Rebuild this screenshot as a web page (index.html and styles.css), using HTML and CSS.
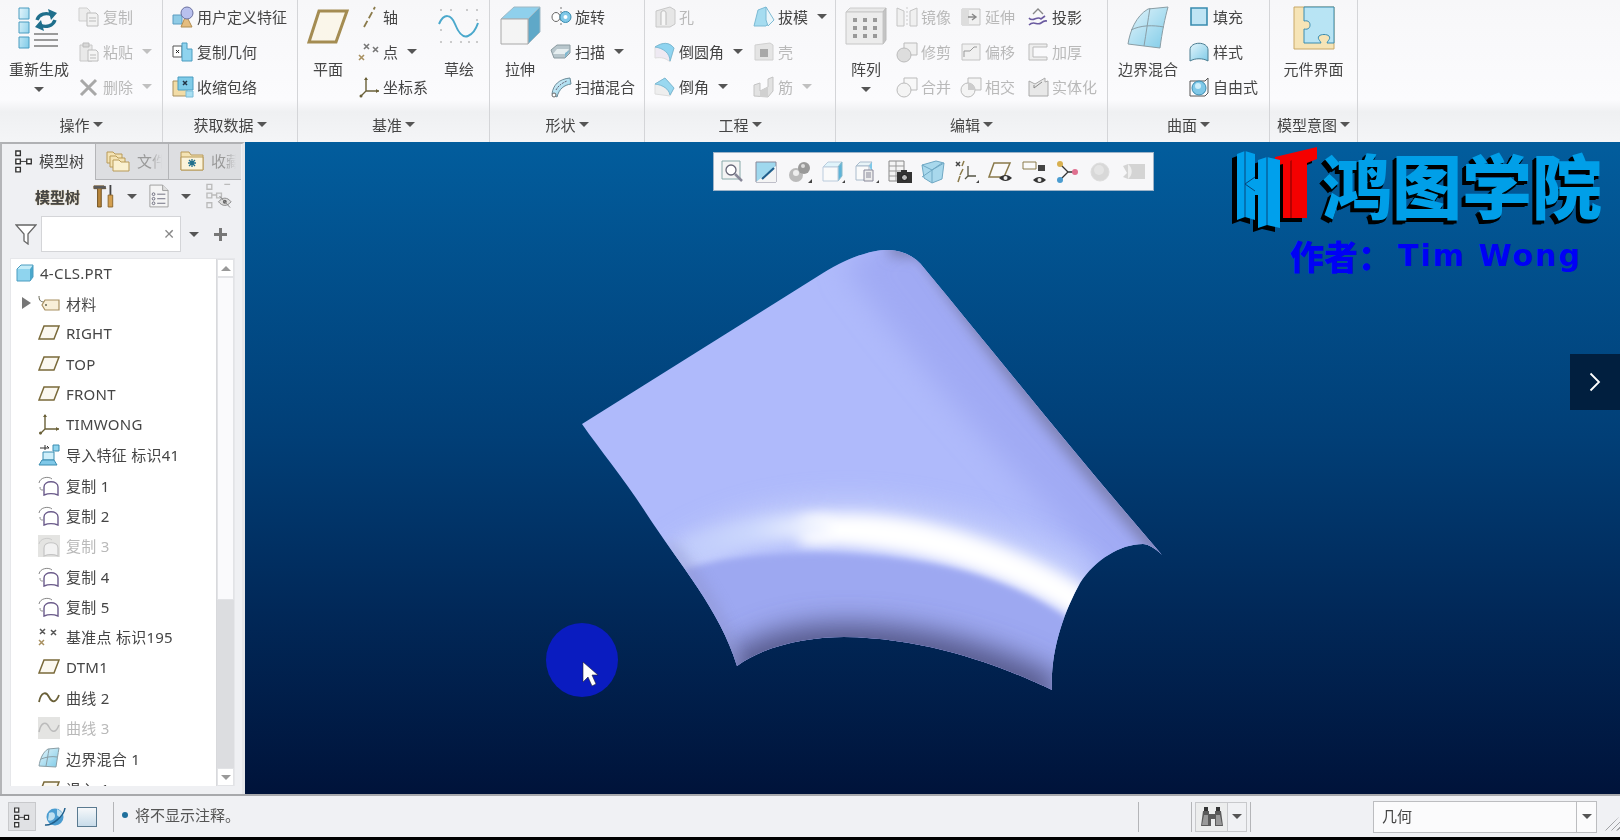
FILE: index.html
```html
<!DOCTYPE html>
<html lang="zh-CN">
<head>
<meta charset="utf-8">
<title>4-CLS.PRT</title>
<link rel="stylesheet" href="styles.css">
</head>
<body>
<svg class="defs" xmlns="http://www.w3.org/2000/svg">
  <defs>
    <linearGradient id="lb" x1="0" y1="0" x2="1" y2="1"><stop offset="0" stop-color="#e4f5fb"/><stop offset="1" stop-color="#7fcbe8"/></linearGradient>
    <symbol id="regen" viewBox="0 0 44 44">
      <g fill="url(#lb)" stroke="#4a9cc0"><path d="M2 2h10v11H2zM2 16h10v11H2zM2 31h10v11H2z"/></g>
      <g fill="none" stroke="#1f6f8c" stroke-width="3.4"><path d="M20 14c2-6 9-8 15-5"/><path d="M38 14c-2 6-9 8-15 5"/></g>
      <path d="M31 3l9 4-6 7zM27 25l-9-4 6-7z" fill="#1f6f8c"/>
      <path d="M17 28h24M17 34h24M17 40h24" stroke="#9a9a9a" stroke-width="2.2"/>
    </symbol>
    <symbol id="copy" viewBox="0 0 22 22"><path d="M1 2h8l3 3v10H1z" fill="#ececec" stroke="#cfcfcf"/><path d="M9 7h9l2 2v11H9z" fill="#f2f2f2" stroke="#bcbcbc"/><path d="M11 12h7M11 15h7" stroke="#bbb"/></symbol>
    <symbol id="paste" viewBox="0 0 22 22"><path d="M2 4h12v16H2z" fill="#e9e9e9" stroke="#c8c8c8"/><path d="M5 2h6v4H5z" fill="#d8d8d8" stroke="#bbb"/><path d="M10 9h8l2 2v9H10z" fill="#f4f4f4" stroke="#bcbcbc"/><path d="M12 14h6M12 17h6" stroke="#bbb"/></symbol>
    <symbol id="del" viewBox="0 0 22 22"><path d="M3 4l15 15M18 4L3 19" stroke="#a8a8a8" stroke-width="3"/></symbol>
    <symbol id="udf" viewBox="0 0 22 22"><path d="M1 9h9v9H1z" fill="#8fcbe6" stroke="#5a9cc0"/><path d="M9 21l5-12 6 12z" fill="#e4bd80" stroke="#b08c50"/><circle cx="15" cy="7" r="6" fill="#b8c0ee" stroke="#6a70a0"/></symbol>
    <symbol id="cgeom" viewBox="0 0 22 22"><path d="M1 5h9v11H1z" fill="#fff" stroke="#555"/><path d="M4 9l3 3M7 9l-3 3" stroke="#222"/><path d="M10 2h5v6h5v12H10z" fill="#8fd3ee" stroke="#4a9cc0"/></symbol>
    <symbol id="shrink" viewBox="0 0 22 22"><path d="M1 5h14v15H1z" fill="#f2dca6" stroke="#a89060"/><path d="M6 1h15v13H6z" fill="#7fcbe8" stroke="#4a9cc0"/><path d="M11 5l4 4M15 5l-4 4" stroke="#234" stroke-width="1.5"/><path d="M14 15h7v6h-7z" fill="#a9dff2" stroke="#7bbcd8"/></symbol>
    <symbol id="plane" viewBox="0 0 44 44"><path d="M13 5h28L30 36H3z" fill="#faf6ea" stroke="#a48c52" stroke-width="3"/></symbol>
    <symbol id="axis" viewBox="0 0 22 22"><path d="M6 21L17 1" stroke="#8a7a4a" stroke-width="1.8" stroke-dasharray="7 3" fill="none"/></symbol>
    <symbol id="point" viewBox="0 0 22 22" overflow="visible"><path d="M6 3l5 5M11 3L6 8M15 6l5 5M20 6l-5 5" stroke="#777" stroke-width="1.6"/><path d="M1 14l5 5M6 14l-5 5" stroke="#a89060" stroke-width="1.6"/></symbol>
    <symbol id="csys" viewBox="0 0 22 22"><path d="M8 2v13l-5 5M8 15h13" stroke="#6a6038" stroke-width="1.4" fill="none"/><path d="M6 4l2-3 2 3zM18 13l3 2-3 2z" fill="#6a6038"/><circle cx="3" cy="20" r="1.5" fill="#6a6038"/></symbol>
    <symbol id="sketch" viewBox="0 0 44 44"><g fill="#bbb"><circle cx="4" cy="4" r="1"/><circle cx="14" cy="4" r="1"/><circle cx="30" cy="4" r="1"/><circle cx="40" cy="4" r="1"/><circle cx="4" cy="24" r="1"/><circle cx="40" cy="14" r="1"/><circle cx="4" cy="36" r="1"/><circle cx="14" cy="36" r="1"/><circle cx="24" cy="36" r="1"/><circle cx="32" cy="36" r="1"/><circle cx="40" cy="36" r="1"/></g><path d="M2 18c5-11 12-10 16 0s8 14 13 12 8-7 10-13" fill="none" stroke="#4aa8cc" stroke-width="2"/></symbol>
    <symbol id="extrude" viewBox="0 0 44 44"><path d="M3 13L16 1h26L30 13z" fill="#8fd0ec" stroke="#9fb8c4"/><path d="M30 13L42 1v25L30 38z" fill="#5fa8c8" stroke="#9fb8c4"/><path d="M3 13h27v25H3z" fill="#f4f4f4" stroke="#a8a8a8"/></symbol>
    <symbol id="rev" viewBox="0 0 22 22"><path d="M11 1v20" stroke="#777" stroke-dasharray="2 2"/><ellipse cx="6" cy="11" rx="4" ry="4.5" fill="#fff" stroke="#666"/><ellipse cx="15.500" cy="11" rx="5.500" ry="5.500" fill="#7fc8e8" stroke="#3a8cb0"/><circle cx="15.500" cy="11" r="2" fill="#fff"/></symbol>
    <symbol id="sweep" viewBox="0 0 22 22"><path d="M1 9l6-5h13v8l-5 5H4z" fill="#b8c6cc" stroke="#8a9aa0"/><path d="M7 8h12l-4 5H3z" fill="#e6eef0"/><path d="M15 17v-5l5-3" fill="#7fb8d0"/></symbol>
    <symbol id="sblend" viewBox="0 0 22 22"><path d="M2 18C3 9 9 3 20 2l1 6C14 9 9 13 7 21z" fill="url(#lb)" stroke="#6a8a98"/><path d="M6 14c2-4 6-7 11-9" stroke="#667" fill="none" stroke-dasharray="2 1"/><circle cx="4" cy="19" r="2" fill="#fff" stroke="#666"/></symbol>
    <symbol id="hole" viewBox="0 0 22 22"><path d="M2 5l14-4 5 3v14l-5 3H2z" fill="#e6e6e6" stroke="#c8c8c8"/><path d="M7 19V7c0-3 5-3 5 0v12" fill="#f6f6f6" stroke="#bbb"/></symbol>
    <symbol id="draft" viewBox="0 0 22 22"><path d="M1 20l4-16 8-3 5 13-5 6z" fill="#a5dcf0" stroke="#7cbad4"/><path d="M13 1l8 13-6 6-2-6z" fill="#e9f5fa" stroke="#7cbad4"/></symbol>
    <symbol id="round" viewBox="0 0 22 22"><path d="M1 6c8-5 14-5 19 1l-4 14C12 17 7 16 1 17z" fill="#eee9f2" stroke="#ddd"/><path d="M1 6c8-5 14-5 19 1l-4 13c0-8-7-13-15-14z" fill="#8fd4f0" stroke="#7cbad4"/></symbol>
    <symbol id="chamf" viewBox="0 0 22 22"><path d="M1 8l10-6 9 10-4 8-15-2z" fill="#eee" stroke="#ddd"/><path d="M1 8l10-6 9 10-4 7c-1-6-7-10-15-11z" fill="#9ad8f0" stroke="#7cbad4"/></symbol>
    <symbol id="shell" viewBox="0 0 22 22"><path d="M2 4l15-2 3 2v15H2z" fill="#e4e4e4" stroke="#d0d0d0"/><path d="M7 8h8v8H7z" fill="#a8a8a8"/></symbol>
    <symbol id="rib" viewBox="0 0 22 22"><path d="M1 20V9l6-2v8l8-4V3l5-2v14l-5 6z" fill="#e2e2e2" stroke="#c4c4c4"/><path d="M7 15l8-4v10H7z" fill="#d0d0d0"/></symbol>
    <symbol id="pattern" viewBox="0 0 44 44"><path d="M2 6l4-4h36l-3 4z" fill="#e8e8e8" stroke="#ccc"/><path d="M39 6l3-4v32l-3 4z" fill="#c4c4c4" stroke="#bbb"/><path d="M2 6h37v32H2z" fill="#ececec" stroke="#c6c6c6"/><g fill="#999"><path d="M9 12h4v4H9zM19 12h4v4h-4zM29 12h4v4h-4zM9 20h4v4H9zM19 20h4v4h-4zM29 20h4v4h-4zM9 28h4v4H9zM19 28h4v4h-4zM29 28h4v4h-4z"/></g></symbol>
    <symbol id="mirror" viewBox="0 0 22 22"><path d="M1 2l7 3v15H1zM21 2l-7 3v15h7z" fill="#f0f0f0" stroke="#c4c4c4"/><path d="M11 1v20" stroke="#ccc" stroke-dasharray="2 2"/></symbol>
    <symbol id="extend" viewBox="0 0 22 22"><path d="M2 3h18v16H2z" fill="#f0f0f0" stroke="#c4c4c4"/><path d="M2 3h7v16H2z" fill="#ddd"/><path d="M8 11h7M12 8l4 3-4 3" stroke="#888" fill="none" stroke-width="1.4"/></symbol>
    <symbol id="project" viewBox="0 0 22 22"><path d="M2 12c4 5 8-3 12 1l4-3M2 19c5-5 8 1 12-2s4-2 6-2" fill="none" stroke="#6a5aa0" stroke-width="1.6"/><path d="M6 8l5-5 5 5" fill="none" stroke="#888" stroke-width="1.4"/></symbol>
    <symbol id="trim" viewBox="0 0 22 22"><path d="M8 2h13v12H8z" fill="#f0f0f0" stroke="#bbb"/><circle cx="8" cy="14" r="7" fill="#ddd" stroke="#bbb"/></symbol>
    <symbol id="offset" viewBox="0 0 22 22"><path d="M2 3h18v16H2z" fill="#f0f0f0" stroke="#c4c4c4"/><path d="M4 16V10h6l4-4h3" fill="none" stroke="#999"/></symbol>
    <symbol id="thick" viewBox="0 0 22 22"><path d="M2 3h18v3H6v10h14v3H2z" fill="#eee" stroke="#bbb"/></symbol>
    <symbol id="merge" viewBox="0 0 22 22"><path d="M8 2h13v12H8z" fill="#f8f8f8" stroke="#bbb"/><circle cx="8" cy="14" r="7" fill="#f4f4f4" stroke="#bbb"/></symbol>
    <symbol id="isect" viewBox="0 0 22 22"><path d="M8 2h13v12H8z" fill="#f4f4f4" stroke="#bbb"/><circle cx="8" cy="14" r="7" fill="#f4f4f4" stroke="#bbb"/><path d="M8 7a7 7 0 0 1 7 7H8z" fill="#ccc"/></symbol>
    <symbol id="solid" viewBox="0 0 22 22"><path d="M2 5l6 3 10-6v4l3-1v15H2z" fill="#e8e8e8" stroke="#aaa"/><path d="M7 9v3l8-6" fill="none" stroke="#888"/></symbol>
    <symbol id="bblend" viewBox="0 0 44 44"><path d="M2 38C4 25 10 10 22 3l20-2c-3 11-6 25-8 41z" fill="url(#lb)" stroke="#8a9ea6"/><path d="M5 24c10-5 22-5 33-3M24 2c-2 12-4 26-6 38" fill="none" stroke="#8a9ea6"/></symbol>
    <symbol id="fill" viewBox="0 0 22 22"><path d="M3 2h16v17H3z" fill="#bfe4f4" stroke="#3a8cb0" stroke-width="1.6"/></symbol>
    <symbol id="style" viewBox="0 0 22 22"><path d="M2 20V9c0-9 18-9 18 0v11c-5-3-13-3-18 0z" fill="url(#lb)" stroke="#4a7c90"/></symbol>
    <symbol id="free" viewBox="0 0 22 22"><path d="M2 5h15l3-3v15l-3 3H2z" fill="none" stroke="#555"/><circle cx="11" cy="12" r="7" fill="#7fc8e8" stroke="#3a8cb0"/><circle cx="10" cy="10" r="3" fill="#cdeefa"/></symbol>
    <symbol id="iface" viewBox="0 0 44 44"><path d="M2 1h40v42H2z" fill="#f6e4b6" stroke="#c8a868"/><path d="M12 1H42V37H35c1-3 4-4 2-7-2-2-8-2-10 0-2 3 1 4 2 7H12V23c5 1 6-2 6-4s-1-5-6-4Z" fill="#b8e4f4" stroke="#3a8cb0"/></symbol>
    <symbol id="t-tree" viewBox="0 0 22 26"><g fill="#fff" stroke="#333" stroke-width="1.5"><path d="M2 2h5v5H2zM2 11h5v5H2zM2 20h5v5H2zM14 11h5v5h-5z"/></g><path d="M7 13.500h7" stroke="#333"/></symbol>
    <symbol id="folders" viewBox="0 0 24 24"><g stroke="#b89a58" fill="#f4e3b4"><path d="M1 4h6l2 2h7v9H1z"/><path d="M4 8h6l2 2h7v9H4z"/><path d="M7 12h6l2 2h8v9H7z" fill="#faf0d0"/></g></symbol>
    <symbol id="fav" viewBox="0 0 24 24"><path d="M1 4h8l2 3h12v15H1z" fill="#f4e3b4" stroke="#b89a58"/><path d="M1 9h22v13H1z" fill="#fbf3da" stroke="#b89a58"/><path d="M12 11v8M8 15h8M9 12l6 6M15 12l-6 6" stroke="#1f6f8c" stroke-width="1.3"/></symbol>
    <symbol id="tools" viewBox="0 0 24 26"><path d="M1 2h11l2 3H9v20H5V5H1z" fill="#b8863c" stroke="#6a4a18"/><path d="M1 2h13v3H1z" fill="#5a5a5a"/><path d="M18 1h2v11h-2z" fill="#444"/><path d="M16.500 12h5v13h-5z" fill="#d4a050" stroke="#8a6428"/></symbol>
    <symbol id="list" viewBox="0 0 22 26"><path d="M1 1h14l6 6v18H1z" fill="#f4f4f4" stroke="#999"/><path d="M15 1v6h6" fill="#ddd" stroke="#999"/><g stroke="#667" fill="none"><circle cx="5" cy="11" r="1.500"/><circle cx="5" cy="16" r="1.500"/><circle cx="5" cy="21" r="1.500"/><path d="M9 11h9M9 16h9M9 21h9"/></g></symbol>
    <symbol id="hide" viewBox="0 0 28 26"><g fill="none" stroke="#bbb" stroke-width="1.4"><path d="M1 1h5v5H1zM1 10h5v5H1zM1 20h5v5H1zM11 10h5v5h-5zM19 1h6M6 12h5"/></g><path d="M13 19c4-5 9-5 13 0-4 5-9 5-13 0z" fill="#ddd" stroke="#888"/><circle cx="19.500" cy="19" r="2" fill="#666"/><path d="M14 13l11 12" stroke="#888"/></symbol>
    <symbol id="funnel" viewBox="0 0 22 22"><path d="M1 2h20l-8 9v10l-4-3v-7z" fill="#fff" stroke="#666" stroke-width="1.3"/></symbol>
    <symbol id="t-cube" viewBox="0 0 18 18"><path d="M1 5l4-4h12l-3 4z" fill="#c4ecf8"/><path d="M14 5l3-4v12l-3 4z" fill="#4aa8cc"/><path d="M1 5h13v12H1z" fill="#8fd4ee"/><path d="M1 5l4-4h12v12l-3 4H1z" fill="none" stroke="#4a9cc0"/></symbol>
    <symbol id="t-tag" viewBox="0 0 22 18"><path d="M1 2c0 5 2 6 6 6" fill="none" stroke="#665"/><path d="M7 6h14v10H7l-3-5z" fill="#f8efd8" stroke="#a89060" stroke-width="1.2"/><circle cx="8" cy="11" r="1" fill="#665"/></symbol>
    <symbol id="t-plane" viewBox="0 0 22 18"><path d="M6 2h15l-5 13H1z" fill="#fbf8f0" stroke="#7a6a3a" stroke-width="1.5"/></symbol>
    <symbol id="t-csys" viewBox="0 0 22 22"><path d="M7 2v14l-5 5M7 16h14" stroke="#6a6038" stroke-width="1.4" fill="none"/><path d="M5 4l2-3 2 3zM18 14l3 2-3 2z" fill="#6a6038"/><circle cx="2.500" cy="20" r="1.500" fill="#6a6038"/></symbol>
    <symbol id="t-import" viewBox="0 0 22 22"><path d="M15 1h6v6h-6z" fill="#8fd4ee" stroke="#3a8cb0"/><path d="M5 8h11v8H5z" fill="#cfeffa" stroke="#3a8cb0"/><path d="M1 21l3-5h12l3 5z" fill="#7fc8e8" stroke="#3a8cb0"/><path d="M7 1v5M2 4h9l-2-2M9 4" stroke="#333" fill="none"/></symbol>
    <symbol id="t-copy" viewBox="0 0 22 22"><path d="M1 9C2 3 11 2 14 5" fill="none" stroke="#888"/><path d="M2 13c0 3 1 3 3 3" fill="none" stroke="#888"/><path d="M6 21V13C6 6 20 6 20 13v8c-5-2-9-2-14 0z" fill="#fff" stroke="#6a5a8a" stroke-width="1.4"/></symbol>
    <symbol id="t-copyd" viewBox="0 0 22 22"><path d="M0 0h22v22H0z" fill="#e4e4e2"/><path d="M1 9C2 3 11 2 14 5" fill="none" stroke="#ccc"/><path d="M6 21V13C6 6 20 6 20 13v8c-5-2-9-2-14 0z" fill="#f2f2f2" stroke="#c4c4c4" stroke-width="1.2"/></symbol>
    <symbol id="t-pts" viewBox="0 0 22 20"><path d="M2 2l5 5M7 2L2 7M13 3l5 5M18 3l-5 5" stroke="#555" stroke-width="1.500"/><path d="M1 13l5 5M6 13l-5 5" stroke="#a89060" stroke-width="1.500"/></symbol>
    <symbol id="t-curve" viewBox="0 0 22 14"><path d="M1 12C3 2 8 1 11 7s7 6 10-2" fill="none" stroke="#6a6038" stroke-width="1.800"/></symbol>
    <symbol id="t-curved" viewBox="0 0 22 22"><path d="M0 0h22v22H0z" fill="#e4e4e2"/><path d="M1 15C3 5 8 4 11 10s7 6 10-2" fill="none" stroke="#bbb" stroke-width="1.500"/></symbol>
    <symbol id="t-bb" viewBox="0 0 22 22"><path d="M1 19C2 12 5 5 10 2l11-1c-1 6-2 12-3 19z" fill="url(#lb)" stroke="#8a9ea6"/><path d="M3 12c5-2 11-3 16-2M11 2c-1 6-2 12-3 17" fill="none" stroke="#8a9ea6"/></symbol>
    <symbol id="globe" viewBox="0 0 22 22"><circle cx="11" cy="11" r="8.500" fill="#4a9cd0"/><path d="M5 7c4-2 6 0 6 3s-4 6-7 4M13 3c3 2 6 3 5 6s-4 2-5 0" fill="#bfe0f0"/><path d="M1 19C8 20 20 10 21 2" fill="none" stroke="#1f5f8c" stroke-width="1.500"/></symbol>
    <symbol id="bino" viewBox="0 0 24 22"><path d="M3 5h6v3h6V5h6l2 15h-8v-7H11v7H1z" fill="#5a5a5a"/><path d="M4 9h4v10H2z" fill="#999"/><path d="M16 9h4l2 10h-6z" fill="#999"/><path d="M4 1h4v4H4zM16 1h4v4h-4z" fill="#333"/></symbol>
    <symbol id="v1" viewBox="0 0 24 24"><path d="M1 1h18v18H1z" fill="#f4f4f4" stroke="#8aa"/><circle cx="10" cy="10" r="5" fill="#fff" stroke="#667" stroke-width="1.300"/><path d="M14 14l7 7" stroke="#889" stroke-width="2.500"/></symbol>
    <symbol id="v2" viewBox="0 0 24 24"><path d="M2 2h20v20H2z" fill="#9fd8ee" stroke="#889"/><path d="M2 22L22 6v16z" fill="#f4f4f4"/><path d="M8 19L20 8" stroke="#1f5f8c" stroke-width="2.200"/></symbol>
    <symbol id="v3" viewBox="0 0 24 24"><circle cx="8" cy="15" r="7" fill="#bbb"/><circle cx="8" cy="13" r="3" fill="#eee"/><circle cx="16" cy="8" r="6" fill="#999"/><circle cx="15" cy="6" r="2" fill="#ddd"/><path d="M20 23l4-4v4z" fill="#444"/></symbol>
    <symbol id="v4" viewBox="0 0 24 24"><path d="M2 7l5-5h14l-4 5z" fill="#e0f4fb" stroke="#bcd"/><path d="M17 7l4-5v14l-4 5z" fill="#5fb4d8" stroke="#8bc"/><path d="M2 7h15v14H2z" fill="#fafafa" stroke="#bcd"/><path d="M21 23l3-3v3z" fill="#444"/></symbol>
    <symbol id="v5" viewBox="0 0 24 24"><path d="M1 6l4-4h12l-3 4z" fill="#e8f4f8" stroke="#abc"/><path d="M14 6l3-4v10z" fill="#7fc8e8"/><path d="M1 6h13v14H1z" fill="#fafafa" stroke="#abc"/><path d="M9 10h9v11H9z" fill="#eee" stroke="#889"/><path d="M11 13h5M11 15h5M11 17h5" stroke="#889"/><path d="M21 23l3-3v3z" fill="#444"/></symbol>
    <symbol id="v6" viewBox="0 0 24 24"><path d="M1 1h15v20H1z" fill="#f4f4f4" stroke="#888"/><path d="M1 6h15M1 11h15M1 16h15M8 1v20" stroke="#999"/><path d="M9 12h15v11H9z" fill="#333"/><path d="M13 10h6v3h-6z" fill="#333"/><circle cx="16.500" cy="17.500" r="3" fill="#bbb" stroke="#111"/></symbol>
    <symbol id="v7" viewBox="0 0 24 24"><path d="M1 5l14-4 8 2-2 16-10 4-8-5z" fill="#a8d8ec" stroke="#6fa8c4"/><path d="M1 5l10 5 12-7M11 10v13M1 17l20-14" fill="none" stroke="#6fa8c4"/></symbol>
    <symbol id="v8" viewBox="0 0 24 24"><path d="M1 2l4 4M5 2L1 6" stroke="#444" stroke-width="1.500"/><path d="M9 1L7 6M5 16l-2 6M8 9L5 15" stroke="#8a7a4a" stroke-width="1.500"/><path d="M13 6v10M13 16h8M13 16l-3 3" stroke="#554" stroke-width="1.300" fill="none"/><path d="M21 23l3-3v3z" fill="#444"/></symbol>
    <symbol id="v9" viewBox="0 0 24 24"><path d="M6 3h16l-6 14H1z" fill="#fafafa" stroke="#8a7a4a" stroke-width="1.500"/><path d="M11 18c4-4 9-4 13 0-4 4-9 4-13 0z" fill="#333"/><circle cx="17.500" cy="18" r="2" fill="#eee"/></symbol>
    <symbol id="v10" viewBox="0 0 24 24"><path d="M1 2h13v7H1z" fill="#fafafa" stroke="#8a7a4a"/><path d="M16 5h7v6h-7z" fill="#444"/><path d="M11 20c4-4 9-4 13 0-4 4-9 4-13 0z" fill="#333"/><circle cx="17.500" cy="20" r="2" fill="#eee"/></symbol>
    <symbol id="v11" viewBox="0 0 24 24"><path d="M5 4l8 8-8 8M13 12h7" fill="none" stroke="#333" stroke-width="1.300"/><circle cx="5" cy="4" r="3" fill="#d8b050"/><circle cx="20" cy="12" r="3" fill="#e07090"/><circle cx="5" cy="20" r="3" fill="#4a9cd0"/></symbol>
    <symbol id="v12" viewBox="0 0 24 24"><circle cx="12" cy="12" r="9" fill="#d8d8d8" stroke="#ddd"/><circle cx="11" cy="10" r="5" fill="#e4e4e4"/></symbol>
    <symbol id="v13" viewBox="0 0 24 24"><path d="M1 6l5-2h17v15H6l-5-2 4-4z" fill="#d4d4d4"/><path d="M6 4c5 4 5 11 0 15z" fill="#eee"/></symbol>
    <filter id="b3" filterUnits="userSpaceOnUse" x="500" y="200" width="760" height="560"><feGaussianBlur stdDeviation="3"/></filter>
    <filter id="b7" filterUnits="userSpaceOnUse" x="500" y="200" width="760" height="560"><feGaussianBlur stdDeviation="7"/></filter>
    <filter id="b14" filterUnits="userSpaceOnUse" x="500" y="200" width="760" height="560"><feGaussianBlur stdDeviation="14"/></filter>
    <linearGradient id="hl" gradientUnits="userSpaceOnUse" x1="670" y1="0" x2="1080" y2="0"><stop offset="0" stop-color="#bcc8fb"/><stop offset=".2" stop-color="#ccd8fd"/><stop offset=".42" stop-color="#fff"/><stop offset="1" stop-color="#fff"/></linearGradient>
    <clipPath id="surf"><path d="M582 424L823 273C850 256 875 249 890 250C905 251 917 258 924 268C1000 360 1080 460 1162 555C1155 548 1148 544 1143 544C1120 544 1095 560 1080 583C1065 610 1050 650 1052 690C1020 675 940 638 844 637C810 637 765 645 737 666C720 610 680 565 646 513C625 480 600 450 582 424Z"/></clipPath>
  </defs>
</svg>
<div class="app">
  <header class="ribbon">
    <section class="group g1">
      <div class="gbody">
        <div class="big w78"><svg class="ib"><use href="#regen"/></svg><span>重新生成</span><i class="caret"></i></div>
        <div class="col">
          <div class="item off"><svg class="is"><use href="#copy"/></svg>复制</div>
          <div class="item off"><svg class="is"><use href="#paste"/></svg>粘贴<i class="caret pale ml"></i></div>
          <div class="item off"><svg class="is"><use href="#del"/></svg>删除<i class="caret pale ml"></i></div>
        </div>
      </div>
      <div class="gfoot">操作<i class="caret"></i></div>
    </section>
    <section class="group g2">
      <div class="gbody">
        <div class="col">
          <div class="item"><svg class="is"><use href="#udf"/></svg>用户定义特征</div>
          <div class="item"><svg class="is"><use href="#cgeom"/></svg>复制几何</div>
          <div class="item"><svg class="is"><use href="#shrink"/></svg>收缩包络</div>
        </div>
      </div>
      <div class="gfoot">获取数据<i class="caret"></i></div>
    </section>
    <section class="group g3">
      <div class="gbody">
        <div class="big w60"><svg class="ib"><use href="#plane"/></svg><span>平面</span></div>
        <div class="col w71">
          <div class="item"><svg class="is"><use href="#axis"/></svg>轴</div>
          <div class="item"><svg class="is"><use href="#point"/></svg>点<i class="caret ml"></i></div>
          <div class="item"><svg class="is"><use href="#csys"/></svg>坐标系</div>
        </div>
        <div class="big w60"><svg class="ib"><use href="#sketch"/></svg><span>草绘</span></div>
      </div>
      <div class="gfoot">基准<i class="caret"></i></div>
    </section>
    <section class="group g4">
      <div class="gbody">
        <div class="big w60"><svg class="ib"><use href="#extrude"/></svg><span>拉伸</span></div>
        <div class="col">
          <div class="item"><svg class="is"><use href="#rev"/></svg>旋转</div>
          <div class="item"><svg class="is"><use href="#sweep"/></svg>扫描<i class="caret ml"></i></div>
          <div class="item"><svg class="is"><use href="#sblend"/></svg>扫描混合</div>
        </div>
      </div>
      <div class="gfoot">形状<i class="caret"></i></div>
    </section>
    <section class="group g5">
      <div class="gbody">
        <div class="col w98">
          <div class="item off"><svg class="is"><use href="#hole"/></svg>孔</div>
          <div class="item"><svg class="is"><use href="#round"/></svg>倒圆角<i class="caret ml"></i></div>
          <div class="item"><svg class="is"><use href="#chamf"/></svg>倒角<i class="caret ml"></i></div>
        </div>
        <div class="col">
          <div class="item"><svg class="is"><use href="#draft"/></svg>拔模<i class="caret ml"></i></div>
          <div class="item off"><svg class="is"><use href="#shell"/></svg>壳</div>
          <div class="item off"><svg class="is"><use href="#rib"/></svg>筋<i class="caret pale ml"></i></div>
        </div>
      </div>
      <div class="gfoot">工程<i class="caret"></i></div>
    </section>
    <section class="group g6">
      <div class="gbody">
        <div class="big w60"><svg class="ib"><use href="#pattern"/></svg><span>阵列</span><i class="caret"></i></div>
        <div class="col w64">
          <div class="item off"><svg class="is"><use href="#mirror"/></svg>镜像</div>
          <div class="item off"><svg class="is"><use href="#trim"/></svg>修剪</div>
          <div class="item off"><svg class="is"><use href="#merge"/></svg>合并</div>
        </div>
        <div class="col w67">
          <div class="item off"><svg class="is"><use href="#extend"/></svg>延伸</div>
          <div class="item off"><svg class="is"><use href="#offset"/></svg>偏移</div>
          <div class="item off"><svg class="is"><use href="#isect"/></svg>相交</div>
        </div>
        <div class="col">
          <div class="item"><svg class="is"><use href="#project"/></svg>投影</div>
          <div class="item off"><svg class="is"><use href="#thick"/></svg>加厚</div>
          <div class="item off"><svg class="is"><use href="#solid"/></svg>实体化</div>
        </div>
      </div>
      <div class="gfoot">编辑<i class="caret"></i></div>
    </section>
    <section class="group g7">
      <div class="gbody">
        <div class="big w80"><svg class="ib"><use href="#bblend"/></svg><span>边界混合</span></div>
        <div class="col">
          <div class="item"><svg class="is"><use href="#fill"/></svg>填充</div>
          <div class="item"><svg class="is"><use href="#style"/></svg>样式</div>
          <div class="item"><svg class="is"><use href="#free"/></svg>自由式</div>
        </div>
      </div>
      <div class="gfoot">曲面<i class="caret"></i></div>
    </section>
    <section class="group g8">
      <div class="gbody">
        <div class="big w87"><svg class="ib"><use href="#iface"/></svg><span>元件界面</span></div>
      </div>
      <div class="gfoot">模型意图<i class="caret"></i></div>
    </section>
  </header>

  <main class="main">
    <aside class="side">
      <nav class="tabs">
        <div class="tab active t1"><svg class="tab-ic"><use href="#t-tree"/></svg><span>模型树</span></div>
        <div class="tab t2"><svg class="tab-ic"><use href="#folders"/></svg><span class="fade">文件夹</span></div>
        <div class="tab t3"><svg class="tab-ic"><use href="#fav"/></svg><span class="fade">收藏夹</span></div>
      </nav>
      <div class="toolrow">
        <b class="tool-title">模型树</b>
        <svg class="tool-ic"><use href="#tools"/></svg><i class="caret"></i>
        <svg class="tool-ic list"><use href="#list"/></svg><i class="caret"></i>
        <svg class="tool-ic hide"><use href="#hide"/></svg>
      </div>
      <div class="filterrow">
        <svg class="funnel"><use href="#funnel"/></svg>
        <div class="search"><span class="x">✕</span></div>
        <i class="caret"></i>
        <span class="plus"></span>
      </div>
      <div class="tree">
        <ul class="rows">
          <li class="top"><svg class="ti cube"><use href="#t-cube"/></svg>4-CLS.PRT</li>
          <li><i class="expand"></i><svg class="ti"><use href="#t-tag"/></svg>材料</li>
          <li><svg class="ti"><use href="#t-plane"/></svg>RIGHT</li>
          <li><svg class="ti"><use href="#t-plane"/></svg>TOP</li>
          <li><svg class="ti"><use href="#t-plane"/></svg>FRONT</li>
          <li><svg class="ti"><use href="#t-csys"/></svg>TIMWONG</li>
          <li><svg class="ti"><use href="#t-import"/></svg>导入特征 标识41</li>
          <li><svg class="ti"><use href="#t-copy"/></svg>复制 1</li>
          <li><svg class="ti"><use href="#t-copy"/></svg>复制 2</li>
          <li class="off"><svg class="ti"><use href="#t-copyd"/></svg>复制 3</li>
          <li><svg class="ti"><use href="#t-copy"/></svg>复制 4</li>
          <li><svg class="ti"><use href="#t-copy"/></svg>复制 5</li>
          <li><svg class="ti"><use href="#t-pts"/></svg>基准点 标识195</li>
          <li><svg class="ti"><use href="#t-plane"/></svg>DTM1</li>
          <li><svg class="ti"><use href="#t-curve"/></svg>曲线 2</li>
          <li class="off"><svg class="ti"><use href="#t-curved"/></svg>曲线 3</li>
          <li><svg class="ti"><use href="#t-bb"/></svg>边界混合 1</li>
          <li><svg class="ti"><use href="#t-plane"/></svg>退入 1</li>
        </ul>
        <div class="sb">
          <div class="sb-btn"><i class="tri up"></i></div>
          <div class="sb-thumb"></div>
          <div class="sb-track"></div>
          <div class="sb-btn"><i class="tri down"></i></div>
        </div>
      </div>
    </aside>

    <section class="view">
      <svg class="canvas" viewBox="245 142 1375 652" xmlns="http://www.w3.org/2000/svg">
        <g clip-path="url(#surf)">
          <path d="M560 240H1180V700H560z" fill="#afbafb"/>
          <path d="M880 240C960 350 1070 470 1170 570" fill="none" stroke="#a0aaf4" stroke-width="90" filter="url(#b14)"/>
          <path d="M890 248H924C1000 360 1080 460 1164 555" fill="none" stroke="#7a7eae" stroke-width="16" filter="url(#b7)"/>
          <path d="M672 570C770 500 930 500 1085 585" fill="none" stroke="#c8d2fc" stroke-width="38" filter="url(#b14)" opacity=".85"/>
          <path d="M800 518C880 503 990 528 1090 590L1080 622C1000 570 900 545 800 545Z" fill="#fff" filter="url(#b7)"/>
          <path d="M672 558C730 532 780 524 830 528" fill="none" stroke="url(#hl)" stroke-width="22" filter="url(#b7)"/>
          <path d="M664 578C730 546 860 548 950 568C1000 580 1050 602 1082 632L1060 710L730 700Z" fill="#9da8f1" filter="url(#b3)"/>
          <path d="M1052 698C1020 680 940 645 844 645C810 645 765 652 737 675" fill="none" stroke="#55598a" stroke-width="44" filter="url(#b14)"/>
          <path d="M737 666C720 610 690 570 668 545" fill="none" stroke="#8a90c8" stroke-width="10" filter="url(#b7)" opacity=".6"/>
        </g>
        <ellipse class="spot" cx="582" cy="660" rx="36" ry="37"/>
        <path class="cursor" d="M583 662V682L588 677L592 686L596 684L592 675H598Z"/>
      </svg>

      <div class="logo">
        <div class="logo-top">
          <svg class="ht" viewBox="0 0 92 88" xmlns="http://www.w3.org/2000/svg">
            <g fill="#000" transform="translate(-5 4)">
              <path d="M9 9l8-3 10 3v66l-10-3-8 3zM27 36h5v14h-5zM30 15l9-3 13 3v68l-13-3-9 3z"/>
              <path d="M47 12L89 2v12l-10 4v55l-24 0V19l-8 2z"/>
            </g>
            <path d="M47 12L89 2v12l-10 4v55l-24 0V19l-8 2z" fill="#f50000"/>
            <path d="M64 15v58h-2V16z" fill="#b80000"/>
            <path d="M9 9l8-3 10 3v66l-10-3-8 3z" fill="#00a0ec"/>
            <path d="M27 34h4v16h-4z" fill="#00a0ec"/>
            <path d="M30 15l9-3 13 3v68l-13-3-9 3z" fill="#00a0ec"/>
            <path d="M17 6v66M39 12v68M27 32l-10 7 10 7" fill="none" stroke="#06457a"/>
          </svg>
          <span class="logo-name">鸿图学院</span>
        </div>
        <div class="author"><span class="author-cn">作者：</span><span class="author-en">Tim Wong</span></div>
      </div>

      <div class="vbar">
        <svg class="vi"><use href="#v1"/></svg>
        <svg class="vi"><use href="#v2"/></svg>
        <svg class="vi"><use href="#v3"/></svg>
        <svg class="vi"><use href="#v4"/></svg>
        <svg class="vi"><use href="#v5"/></svg>
        <svg class="vi"><use href="#v6"/></svg>
        <svg class="vi"><use href="#v7"/></svg>
        <svg class="vi"><use href="#v8"/></svg>
        <svg class="vi"><use href="#v9"/></svg>
        <svg class="vi"><use href="#v10"/></svg>
        <svg class="vi"><use href="#v11"/></svg>
        <svg class="vi"><use href="#v12"/></svg>
        <svg class="vi"><use href="#v13"/></svg>
      </div>

      <div class="nextbtn"><svg class="chev" viewBox="0 0 12 20"><path d="M1.500 1.500L10 10l-8.500 8.500" fill="none" stroke="#fff" stroke-width="1.800"/></svg></div>
    </section>
  </main>

  <footer class="status">
    <div class="st-btn"><svg class="st-tree"><use href="#t-tree"/></svg></div>
    <svg class="st-ic"><use href="#globe"/></svg>
    <span class="st-box"></span>
    <span class="st-sep"></span>
    <span class="st-dot"></span>
    <span class="st-msg">将不显示注释。</span>
    <span class="st-sep push"></span>
    <span class="st-sep far"></span>
    <div class="st-find"><span class="find-main"><svg class="bino"><use href="#bino"/></svg></span><span class="find-arrow"><i class="caret"></i></span></div>
    <span class="st-sep near"></span>
    <div class="st-select"><span class="sel-text">几何</span><span class="sel-arrow"><i class="caret"></i></span></div>
    <span class="grip"></span>
  </footer>
  <div class="strip"></div>
</div>
</body>
</html>
```

FILE: styles.css
```css
* { box-sizing: border-box; }
html, body { margin: 0; height: 100%; background: #000; overflow: hidden; }
body { font-family: "Noto Sans", "Noto Sans CJK SC", sans-serif; font-size: 15px; color: #454545; }
.defs { display: block; width: 0; height: 0; overflow: hidden; }
.app { width: 1620px; height: 840px; display: flex; flex-direction: column; overflow: hidden; }

/* ribbon */
.ribbon {
  height: 142px; display: flex; flex: none; filter: blur(.4px);
  background: linear-gradient(#f7f7f9 0, #fbfbfd 100px, #eff0f2 112px, #f4f5f7 142px);
}
.group { display: flex; flex-direction: column; flex: none; border-right: 1px solid #d4d5d8; }
.g1 { width: 163px; } .g2 { width: 135px; } .g3 { width: 192px; } .g4 { width: 155px; }
.g5 { width: 191px; } .g6 { width: 272px; } .g7 { width: 162px; } .g8 { width: 88px; }
.gbody { height: 110px; display: flex; }
.g2 .gbody { padding-left: 9px; }
.g5 .gbody { padding-left: 9px; }
.gfoot { height: 32px; display: flex; align-items: center; justify-content: center; gap: 3px; padding-bottom: 3px; }
.col { display: flex; flex-direction: column; flex: none; }
.w71 { width: 71px; } .w98 { width: 99px; } .w64 { width: 64px; } .w67 { width: 67px; }
.item { height: 35px; display: flex; align-items: center; gap: 3px; white-space: nowrap; padding-bottom: 2px; }
.off { color: #b9b9b9; }
.is { width: 22px; height: 22px; flex: none; }
.big { display: flex; flex-direction: column; align-items: center; padding-top: 6px; flex: none; }
.big span { line-height: 24px; margin-top: 7px; white-space: nowrap; }
.big .caret { margin-top: 6px; }
.w78 { width: 78px; } .w60 { width: 60px; } .w80 { width: 80px; } .w87 { width: 87px; }
.ib { width: 44px; height: 44px; flex: none; }
.caret { display: inline-block; width: 0; height: 0; flex: none; border-left: 5px solid transparent; border-right: 5px solid transparent; border-top: 5px solid #555; }
.caret.pale { border-top-color: #c0c0c0; }
.caret.ml { margin-left: 6px; }

/* main */
.main { flex: 1; display: flex; min-height: 0; }
.side { width: 245px; flex: none; display: flex; flex-direction: column; background: #eff0f3; border-left: 2px solid #b4b5b8; border-top: 2px solid #b0b1b4; border-right: 3px solid #e6e7ea; filter: blur(.4px); }
.tabs { height: 36px; display: flex; flex: none; }
.tab { display: flex; align-items: center; gap: 7px; overflow: hidden; white-space: nowrap; border-bottom: 1px solid #b4b5b8; border-left: 1px solid #b4b5b8; background: #dddee1; color: #9a9a9a; padding-bottom: 3px; }
.tab.active { background: #eff0f3; border-bottom: 0; border-left: 0; color: #454545; }
.t1 { width: 93px; padding-left: 12px; } .t2 { width: 73px; padding-left: 10px; } .t3 { width: 73px; padding-left: 11px; }
.t1 span { margin-left: -2px; }
.tab span { flex: none; }
.tab span.fade { width: 25px; overflow: hidden; -webkit-mask-image: linear-gradient(90deg, #000 55%, transparent); mask-image: linear-gradient(90deg, #000 55%, transparent); }
.tab-ic { width: 24px; height: 24px; flex: none; }
.t1 .tab-ic { width: 20px; height: 24px; }
.toolrow { height: 36px; display: flex; align-items: center; flex: none; padding: 0 0 4px 33px; }
.tool-title { font-weight: 700; width: 58px; text-shadow: 0 0 1px #b59a5a; }
.tool-ic { width: 22px; height: 26px; flex: none; }
.toolrow .caret { margin: 0 12px 0 12px; }
.tool-ic.list { width: 20px; }
.tool-ic.hide { width: 27px; margin-left: 3px; }
.filterrow { height: 36px; display: flex; align-items: center; flex: none; padding-left: 13px; }
.funnel { width: 22px; height: 22px; flex: none; }
.search { width: 140px; height: 36px; margin-left: 4px; background: #fff; border: 1px solid #d4d5d8; display: flex; align-items: center; justify-content: flex-end; padding-right: 5px; }
.x { color: #888; font-size: 14px; font-family: "DejaVu Sans", sans-serif; }
.filterrow .caret { margin-left: 8px; }
.plus { width: 13px; height: 13px; margin-left: 15px; background: linear-gradient(#777, #777) center/13px 3px no-repeat, linear-gradient(#777, #777) center/3px 13px no-repeat; }
.tree { margin: 6px 0 8px 8px; flex: 1; min-height: 0; display: flex; width: 225px; background: #fff; overflow: hidden; border: 1px solid #e6e7ea; border-bottom: 0; }
.rows { list-style: none; margin: 0; padding: 0; flex: 1; overflow: hidden; letter-spacing: .25px; }
.rows li { height: 30.35px; display: flex; align-items: center; padding: 0 0 3px 27px; white-space: nowrap; gap: 6px; }
.rows li.top { padding-left: 5px; gap: 6px; }
.ti { width: 22px; height: 22px; flex: none; }
.ti.cube { width: 18px; height: 18px; }
.rows li.off { color: #b9b9b9; }
.expand { width: 0; height: 0; margin-left: -16px; margin-right: 1px; border-left: 9px solid #777; border-top: 6px solid transparent; border-bottom: 6px solid transparent; }
.sb { width: 18px; flex: none; display: flex; flex-direction: column; background: #fff; border-left: 1px solid #d8d9dc; }
.sb-btn { height: 18px; flex: none; display: flex; align-items: center; justify-content: center; border: 1px solid #e2e3e6; }
.tri { width: 0; height: 0; border-left: 5px solid transparent; border-right: 5px solid transparent; }
.tri.up { border-bottom: 5px solid #999; }
.tri.down { border-top: 5px solid #999; }
.sb-thumb { height: 323px; flex: none; background: #fafafc; border: 1px solid #e2e3e6; }
.sb-track { flex: 1; background: #dcdde0; }

/* viewport */
.view { flex: 1; position: relative; overflow: hidden; background: linear-gradient(#025d9d 0, #013f77 45%, #012858 72%, #00133a 100%); }
.canvas { position: absolute; left: 0; top: 0; width: 1375px; height: 652px; display: block; }
.spot { fill: #0a1cc0; }
.cursor { fill: #fff; stroke: #223; stroke-width: .6; }
.vbar { position: absolute; left: 468px; top: 10px; width: 441px; height: 39px; display: flex; align-items: center; justify-content: space-between; padding: 0 7px; background: #f7f7f9; border: 1px solid #9db3c8; filter: blur(.35px); }
.vi { width: 24px; height: 24px; flex: none; }
.logo { position: absolute; left: 983px; top: 3px; width: 385px; }
.logo-top { display: flex; align-items: flex-start; height: 88px; }
.ht { width: 92px; height: 88px; flex: none; }
.logo-name { font-family: "Noto Sans CJK SC", sans-serif; font-weight: 900; font-size: 70px; line-height: 78px; color: #009fe8; white-space: nowrap; margin-left: 2px; text-shadow: -3px 3px 0 #000, -2px 2px 0 #000, -1px 3px 0 #000, -4px 4px 0 #000; }
.author { display: flex; align-items: center; color: #0000f5; margin: 3px 0 0 62px; white-space: nowrap; line-height: 40px; }
.author-cn { font-family: "Noto Sans CJK SC", sans-serif; font-weight: 900; font-size: 34px; width: 108px; flex: none; }
.author-en { font-family: "DejaVu Sans", sans-serif; font-weight: 700; font-size: 30px; letter-spacing: 2px; }
.nextbtn { position: absolute; right: 0; top: 212px; width: 50px; height: 56px; background: #011f3f; display: flex; align-items: center; justify-content: center; }
.chev { width: 12px; height: 20px; display: block; }

/* status */
.status { height: 43px; flex: none; display: flex; align-items: center; background: #f0f1f4; border-top: 2px solid #a8a9ac; padding-left: 8px; filter: blur(.4px); }
.st-btn { width: 28px; height: 29px; background: #e0e1e4; border: 1px solid #c8c9cc; display: flex; align-items: center; justify-content: center; flex: none; }
.st-tree { width: 18px; height: 22px; }
.st-ic { width: 22px; height: 22px; margin-left: 8px; flex: none; }
.st-box { width: 20px; height: 20px; margin-left: 11px; border: 1.5px solid #5a7a90; background: linear-gradient(#f6f8fa, #c8dcea); flex: none; }
.st-sep { width: 1px; height: 30px; background: #b4b5b8; flex: none; }
.status > .st-box + .st-sep { margin-left: 16px; }
.st-dot { width: 6px; height: 6px; border-radius: 50%; background: #1f6f9c; margin: 0 7px 4px 8px; flex: none; }
.st-msg { white-space: nowrap; color: #555; padding-bottom: 4px; }
.st-sep.push { margin-left: auto; }
.st-sep.far { margin-left: 52px; }
.st-find { margin-left: 3px; width: 52px; height: 30px; display: flex; border: 1px solid #c8c9cc; flex: none; }
.find-main { width: 32px; display: flex; align-items: center; justify-content: center; background: #eceded; border-right: 1px solid #c8c9cc; }
.find-arrow { flex: 1; display: flex; align-items: center; justify-content: center; }
.bino { width: 24px; height: 22px; }
.st-sep.near { margin-left: 3px; }
.st-select { margin-left: 122px; width: 224px; height: 32px; background: #fbfbfc; border: 1px solid #bcbdc0; display: flex; align-items: center; flex: none; }
.sel-text { flex: 1; padding: 0 0 3px 8px; }
.sel-arrow { width: 20px; height: 100%; border-left: 1px solid #bcbdc0; display: flex; align-items: center; justify-content: center; }
.grip { width: 17px; height: 14px; margin: 14px 0 0 6px; flex: none; background: repeating-linear-gradient(135deg, transparent 0 3px, #a0a1a4 3px 4px); clip-path: polygon(100% 0, 100% 100%, 0 100%); }
.strip { height: 3px; flex: none; background: #000; }
```
